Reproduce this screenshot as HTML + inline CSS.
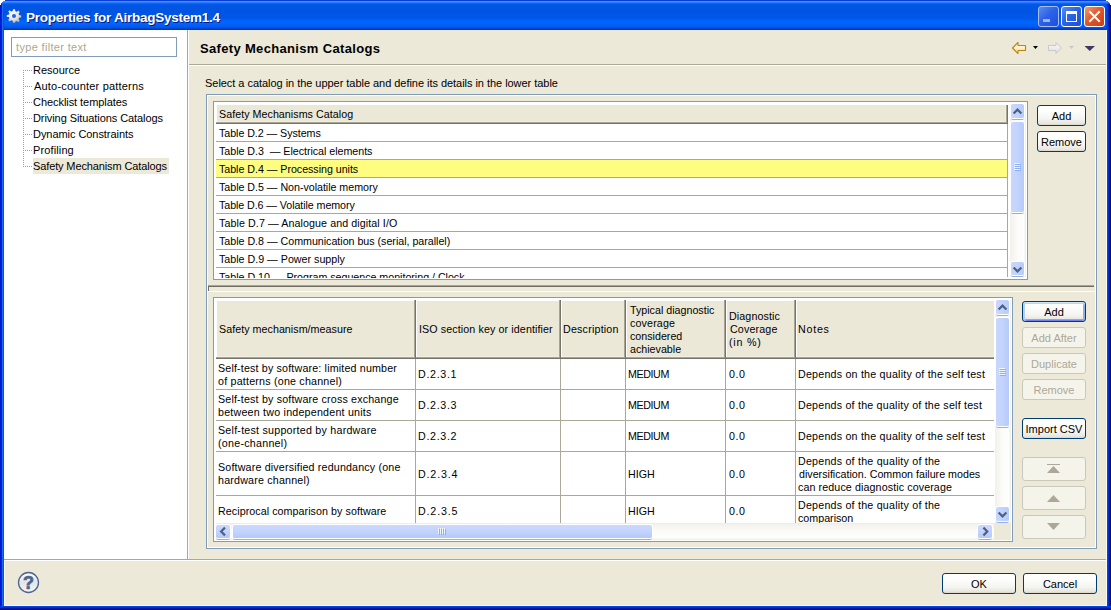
<!DOCTYPE html>
<html><head><meta charset="utf-8"><style>
*{box-sizing:border-box;margin:0;padding:0}
html,body{width:1111px;height:610px;overflow:hidden;background:#fff}
body{position:relative;font-family:"Liberation Sans",sans-serif;font-size:11px;color:#000;line-height:13px}
.a{position:absolute}
.t{position:absolute;white-space:pre;line-height:13px;font-size:11px}
.tt{position:absolute;white-space:pre;line-height:13px;font-size:10.7px}
.btn{position:absolute;border:1px solid #003c74;border-radius:3px;
 background:linear-gradient(to bottom,#fff 0,#fefefd 25%,#f4f4f0 70%,#e6e5de 92%,#d8d5c8 100%);
 text-align:center;font-size:11px;line-height:21px;color:#000;white-space:pre}
.btn.dis{border-color:#cac8bb;background:#f5f4ea;color:#aca899}
.btn.def{box-shadow:inset 0 1px 0 #cee7ff,inset 0 2px 0 #bcd4f6,inset 2px 0 0 #b5cdf3,inset -2px 0 0 #8fb1e6,inset 0 -1px 0 #6982ee,inset 0 -2px 0 #8da9ee}
.sb{position:absolute;border-radius:2px;background:linear-gradient(to right,#c9d7fd 0,#c2d3fc 50%,#b6cbf9 100%);
 box-shadow:0 0 0 1px #fff, 0 2px 0 0 #8fb0e8}
.trackv{position:absolute;background:linear-gradient(to right,#eeede5 0,#eeede5 1px,#f3f1ec 1px,#fbfbf8 50%,#fefefe 90%,#eeede5 100%)}
.trackh{position:absolute;background:linear-gradient(to bottom,#eeede5 0,#eeede5 1px,#f3f1ec 1px,#fbfbf8 50%,#fefefe 90%,#eeede5 100%)}
</style></head><body>
<div class="a" style="left:0;top:0;width:1111px;height:610px;overflow:hidden;background:#0831d9">
<div class="a" style="left:0;top:0;width:1111px;height:30px;background:linear-gradient(to bottom,#0a3fd6 0px,#0a3fd6 1px,#3d8fff 1px,#3d8fff 2px,#2a7dff 2px,#2a7dff 3px,#0c63f5 3px,#0c63f5 4px,#045be9 4px,#0056e4 6px,#0054e2 12px,#0057e8 18px,#0063fb 21px,#0066ff 23px,#005df4 26px,#0050e0 28px,#0039cc 29px,#0036c6 30px)"></div>
<div class="a" style="left:0;top:4px;width:4px;height:606px;background:linear-gradient(to right,#0019cf 0,#0019cf 1px,#0422d8 1px,#0422d8 2px,#1a6aee 2px,#1a6aee 3px,#0a50e6 3px)"></div>
<div class="a" style="left:1105px;top:4px;width:6px;height:26px;background:linear-gradient(to right,rgba(0,40,200,0) 0,#0343ec 2px,#0343ec 2px,#0131cc 3px,#001b98 4px,#000d80 6px)"></div>
<div class="a" style="left:1107px;top:29px;width:4px;height:581px;background:linear-gradient(to right,#0343ec 0,#0343ec 1px,#0131cc 1px,#0131cc 2px,#001b98 2px,#001b98 3px,#000d80 3px)"></div>
<div class="a" style="left:0;top:606px;width:1111px;height:4px;background:linear-gradient(to bottom,#0343ec 0,#0343ec 1px,#0131cc 1px,#0131cc 2px,#001b98 2px,#001b98 3px,#000d80 3px)"></div>
<div class="a" style="left:4px;top:30px;width:1103px;height:576px;background:#ece9d8"></div>
</div>
<div class="a" style="left:1106px;top:30px;width:1px;height:576px;background:#fdf8e8"></div>
<div class="a" style="left:4px;top:605px;width:1103px;height:1px;background:#fdf8e8"></div>
<div class="a" style="left:4px;top:30px;width:1px;height:576px;background:#fdf8e8"></div>
<div class="a" style="left:0px;top:0px;width:5px;height:1px;background:#fff"></div>
<div class="a" style="left:0px;top:1px;width:3px;height:1px;background:#fff"></div>
<div class="a" style="left:0px;top:2px;width:2px;height:1px;background:#fff"></div>
<div class="a" style="left:0px;top:3px;width:1px;height:1px;background:#fff"></div>
<div class="a" style="left:0px;top:4px;width:1px;height:1px;background:#fff"></div>
<div class="a" style="left:1106px;top:0px;width:5px;height:1px;background:#fff"></div>
<div class="a" style="left:1108px;top:1px;width:3px;height:1px;background:#fff"></div>
<div class="a" style="left:1109px;top:2px;width:2px;height:1px;background:#fff"></div>
<div class="a" style="left:1110px;top:3px;width:1px;height:1px;background:#fff"></div>
<div class="a" style="left:1110px;top:4px;width:1px;height:1px;background:#fff"></div>
<svg class="a" style="left:6px;top:8px" width="16" height="16" viewBox="0 0 16 16">
 <defs><radialGradient id="gg" cx="40%" cy="35%" r="70%"><stop offset="0" stop-color="#fbfbfa"/><stop offset="0.6" stop-color="#e4e3df"/><stop offset="1" stop-color="#aeaca4"/></radialGradient></defs>
 <path fill="url(#gg)" d="M7 1.2h2l.4 2.1 1.3.5 1.7-1.2 1.4 1.4-1.2 1.7.5 1.3 2.1.4v2l-2.1.4-.5 1.3 1.2 1.7-1.4 1.4-1.7-1.2-1.3.5L9 14.8H7l-.4-2.1-1.3-.5-1.7 1.2-1.4-1.4 1.2-1.7-.5-1.3L.8 9V7l2.1-.4.5-1.3-1.2-1.7 1.4-1.4 1.7 1.2 1.3-.5z"/>
 <circle cx="8" cy="8" r="2" fill="#1f63e6"/>
</svg>
<div id="t0" class="t" style="left:26px;top:11px;letter-spacing:-0.250px;font-size:13.5px;font-weight:bold;color:#fff;text-shadow:1px 1px 0 #0a1883">Properties for AirbagSystem1.4</div>
<div class="a" style="left:1038px;top:6px;width:21px;height:21px;border:1px solid #a9bdf1;border-radius:3px;background:linear-gradient(135deg,#5a8bf6 0,#2c62e8 45%,#1b4fdc 100%)"></div>
<div class="a" style="left:1043px;top:19px;width:7px;height:3px;background:#a6b2e6"></div>
<div class="a" style="left:1061px;top:6px;width:21px;height:21px;border:1px solid #fff;border-radius:3px;background:linear-gradient(135deg,#5a8bf6 0,#2c62e8 45%,#1b4fdc 100%)"></div>
<div class="a" style="left:1066px;top:11px;width:11px;height:11px;border:1px solid #fff;border-top-width:3px"></div>
<div class="a" style="left:1084px;top:6px;width:21px;height:21px;border:1px solid #fff;border-radius:3px;background:linear-gradient(135deg,#f09a77 0,#e1592e 45%,#cc3d12 100%)"></div>
<svg class="a" style="left:1084px;top:6px" width="21" height="21"><path d="M6 6L15 15M15 6L6 15" stroke="#fff" stroke-width="2" stroke-linecap="square"/></svg>
<div class="a" style="left:4px;top:30px;width:183px;height:529px;background:#fff"></div>
<div class="a" style="left:187px;top:30px;width:1px;height:529px;background:#aca899"></div>
<div class="a" style="left:188px;top:30px;width:1px;height:529px;background:#fff"></div>
<div class="a" style="left:4px;top:559px;width:1102px;height:1px;background:#aca899"></div>
<div class="a" style="left:4px;top:560px;width:1102px;height:1px;background:#fff"></div>
<div class="a" style="left:11px;top:37px;width:166px;height:20px;border:1px solid #7f9db9;background:#fff"></div>
<div id="t1" class="t" style="left:16px;top:41px;letter-spacing:0.333px;color:#aea78f">type filter text</div>
<div class="a" style="left:23px;top:70px;width:1px;height:97px;background-image:linear-gradient(to bottom,#a0a0a0 50%,transparent 50%);background-size:1px 2px"></div>
<div class="a" style="left:33px;top:158px;width:136px;height:16px;background:#ece9d8"></div>
<div class="a" style="left:23px;top:70px;width:10px;height:1px;background-image:linear-gradient(to right,#a0a0a0 50%,transparent 50%);background-size:2px 1px"></div>
<div id="t2" class="t" style="left:33px;top:64px;">Resource</div>
<div class="a" style="left:23px;top:86px;width:10px;height:1px;background-image:linear-gradient(to right,#a0a0a0 50%,transparent 50%);background-size:2px 1px"></div>
<div id="t3" class="t" style="left:34px;top:80px;letter-spacing:0.200px;">Auto-counter patterns</div>
<div class="a" style="left:23px;top:102px;width:10px;height:1px;background-image:linear-gradient(to right,#a0a0a0 50%,transparent 50%);background-size:2px 1px"></div>
<div id="t4" class="t" style="left:33px;top:96px;letter-spacing:-0.056px;">Checklist templates</div>
<div class="a" style="left:23px;top:118px;width:10px;height:1px;background-image:linear-gradient(to right,#a0a0a0 50%,transparent 50%);background-size:2px 1px"></div>
<div id="t5" class="t" style="left:33px;top:112px;letter-spacing:-0.077px;">Driving Situations Catalogs</div>
<div class="a" style="left:23px;top:134px;width:10px;height:1px;background-image:linear-gradient(to right,#a0a0a0 50%,transparent 50%);background-size:2px 1px"></div>
<div id="t6" class="t" style="left:33px;top:128px;letter-spacing:-0.056px;">Dynamic Constraints</div>
<div class="a" style="left:23px;top:150px;width:10px;height:1px;background-image:linear-gradient(to right,#a0a0a0 50%,transparent 50%);background-size:2px 1px"></div>
<div id="t7" class="t" style="left:33px;top:144px;letter-spacing:0.125px;">Profiling</div>
<div class="a" style="left:23px;top:166px;width:10px;height:1px;background-image:linear-gradient(to right,#a0a0a0 50%,transparent 50%);background-size:2px 1px"></div>
<div id="t8" class="t" style="left:33px;top:160px;letter-spacing:-0.125px;">Safety Mechanism Catalogs</div>
<div class="a" style="left:189px;top:64px;width:917px;height:1px;background:#aca899"></div>
<div class="a" style="left:189px;top:65px;width:917px;height:1px;background:#fff"></div>
<div id="t9" class="t" style="left:200px;top:42px;letter-spacing:0.333px;font-size:13px;font-weight:bold">Safety Mechanism Catalogs</div>
<svg class="a" style="left:1010px;top:40px" width="90" height="16" viewBox="0 0 90 16">
 <defs><linearGradient id="ya" x1="0" y1="0" x2="0" y2="1"><stop offset="0" stop-color="#fffdf0"/><stop offset="0.5" stop-color="#fff0c0"/><stop offset="1" stop-color="#fbdc80"/></linearGradient>
 <linearGradient id="ga" x1="0" y1="0" x2="0" y2="1"><stop offset="0" stop-color="#fbfbfb"/><stop offset="1" stop-color="#dedede"/></linearGradient></defs>
 <path d="M2.5 8L8 2.5V5.5H15.5V10.5H8V13.5Z" fill="url(#ya)" stroke="#b98220" stroke-width="1.1" stroke-linejoin="round"/>
 <path d="M23 6H28L25.5 9Z" fill="#000"/>
 <path d="M51.5 8L46 2.5V5.5H38.5V10.5H46V13.5Z" fill="url(#ga)" stroke="#c8c8c8" stroke-width="1" stroke-linejoin="round"/>
 <path d="M59 6H64L61.5 9Z" fill="#c8c8c8"/>
 <path d="M74.5 6H85L79.75 11Z" fill="#3e3a63"/>
</svg>
<div id="t10" class="t" style="left:205px;top:77px;letter-spacing:-0.039px;">Select a catalog in the upper table and define its details in the lower table</div>
<div class="a" style="left:206px;top:94px;width:891px;height:455px;border:1px solid #7f9db9"></div>
<div class="a" style="left:207px;top:95px;width:889px;height:453px;border:1px solid #fff"></div>
<div class="a" style="left:213px;top:101px;width:815px;height:179px;border:1px solid #7f9db9;background:#fff"></div>
<div class="a" style="left:214px;top:102px;width:813px;height:176px;overflow:hidden">
<div class="a" style="left:3px;top:3px;width:791px;height:19px;background:#ebe8d8;box-shadow:inset 0 -1px 0 #77746a,inset -1px 0 0 #77746a,inset 0 -2px 0 #a7a493,inset -2px 0 0 #a7a493,inset 0 -3px 0 #f1efe3,inset -3px 0 0 #f1efe3"></div>
<div class="a" style="left:2px;top:20px;width:1px;height:1px;background:#a7a493"></div>
<div class="a" style="left:2px;top:21px;width:1px;height:1px;background:#77746a"></div>
<div id="t11" class="tt" style="left:5px;top:6px;letter-spacing:0.042px;">Safety Mechanisms Catalog</div>
<div class="a" style="left:2px;top:39px;width:791px;height:1px;background:#aca899"></div>
<div id="t12" class="tt" style="left:5px;top:25px;letter-spacing:-0.056px;">Table D.2 — Systems</div>
<div class="a" style="left:2px;top:57px;width:791px;height:1px;background:#aca899"></div>
<div id="t13" class="tt" style="left:5px;top:43px;letter-spacing:-0.032px;">Table D.3  — Electrical elements</div>
<div class="a" style="left:2px;top:58px;width:791px;height:17px;background:#fffd80"></div>
<div class="a" style="left:2px;top:75px;width:791px;height:1px;background:#aca899"></div>
<div id="t14" class="tt" style="left:5px;top:61px;letter-spacing:-0.037px;">Table D.4 — Processing units</div>
<div class="a" style="left:2px;top:93px;width:791px;height:1px;background:#aca899"></div>
<div id="t15" class="tt" style="left:5px;top:79px;letter-spacing:-0.033px;">Table D.5 — Non-volatile memory</div>
<div class="a" style="left:2px;top:111px;width:791px;height:1px;background:#aca899"></div>
<div id="t16" class="tt" style="left:5px;top:97px;letter-spacing:-0.077px;">Table D.6 — Volatile memory</div>
<div class="a" style="left:2px;top:129px;width:791px;height:1px;background:#aca899"></div>
<div id="t17" class="tt" style="left:5px;top:115px;letter-spacing:0.086px;">Table D.7 — Analogue and digital I/O</div>
<div class="a" style="left:2px;top:147px;width:791px;height:1px;background:#aca899"></div>
<div id="t18" class="tt" style="left:5px;top:133px;letter-spacing:-0.021px;">Table D.8 — Communication bus (serial, parallel)</div>
<div class="a" style="left:2px;top:165px;width:791px;height:1px;background:#aca899"></div>
<div id="t19" class="tt" style="left:5px;top:151px;">Table D.9 — Power supply</div>
<div class="a" style="left:2px;top:183px;width:791px;height:1px;background:#aca899"></div>
<div id="t20" class="tt" style="left:5px;top:169px;letter-spacing:-0.021px;">Table D.10 — Program sequence monitoring / Clock</div>
<div class="a" style="left:793px;top:22px;width:1px;height:153px;background:#aca899"></div>
<div class="a" style="left:795px;top:2px;width:17px;height:173px;background:linear-gradient(to right,#fff 0,#fff 1px,#f3f1ec 1px,#fbfbf8 50%,#fefefe 85%,#eeede5 100%)"></div>
</div>
<div class="sb" style="left:1011px;top:104px;width:13px;height:14px;"></div>
<svg class="a" style="left:1011px;top:104px" width="13" height="14" viewBox="0 0 13 14"><path d="M2.6 9.5L6.5 5.6L10.4 9.5" fill="none" stroke="#4d6185" stroke-width="2.2" stroke-linejoin="miter"/></svg>
<div class="sb" style="left:1011px;top:122px;width:13px;height:90px;"></div>
<div class="a" style="left:1015px;top:164px;width:6px;height:1px;background:#8cb0f8"></div>
<div class="a" style="left:1014px;top:163px;width:6px;height:1px;background:#eef4fe"></div>
<div class="a" style="left:1015px;top:166px;width:6px;height:1px;background:#8cb0f8"></div>
<div class="a" style="left:1014px;top:165px;width:6px;height:1px;background:#eef4fe"></div>
<div class="a" style="left:1015px;top:168px;width:6px;height:1px;background:#8cb0f8"></div>
<div class="a" style="left:1014px;top:167px;width:6px;height:1px;background:#eef4fe"></div>
<div class="a" style="left:1015px;top:170px;width:6px;height:1px;background:#8cb0f8"></div>
<div class="a" style="left:1014px;top:169px;width:6px;height:1px;background:#eef4fe"></div>
<div class="sb" style="left:1011px;top:262px;width:13px;height:13px;"></div>
<svg class="a" style="left:1011px;top:262px" width="13" height="13" viewBox="0 0 13 13"><path d="M2.6 5.5L6.5 9.4L10.4 5.5" fill="none" stroke="#4d6185" stroke-width="2.2" stroke-linejoin="miter"/></svg>
<div class="btn" style="left:1037px;top:105px;width:49px;height:21px">Add</div>
<div class="btn" style="left:1037px;top:131px;width:49px;height:21px">Remove</div>
<div class="a" style="left:208px;top:285px;width:886px;height:1px;background:#a7a493"></div>
<div class="a" style="left:208px;top:286px;width:886px;height:1px;background:#716f64"></div>
<div class="a" style="left:208px;top:286px;width:1px;height:5px;background:#716f64"></div>
<div class="a" style="left:208px;top:291px;width:887px;height:1px;background:#fff"></div>
<div class="a" style="left:213px;top:297px;width:800px;height:245px;border:1px solid #7f9db9;background:#fff"></div>
<div class="a" style="left:217px;top:301px;width:777px;height:58px;background:#ebe8d8"></div>
<div class="a" style="left:217px;top:356px;width:777px;height:1px;background:#f1efe3"></div>
<div class="a" style="left:216px;top:357px;width:778px;height:1px;background:#a7a493"></div>
<div class="a" style="left:216px;top:358px;width:778px;height:1px;background:#77746a"></div>
<div class="a" style="left:414px;top:300px;width:1px;height:57px;background:#a7a493"></div>
<div class="a" style="left:415px;top:300px;width:1px;height:59px;background:#77746a"></div>
<div class="a" style="left:416px;top:301px;width:1px;height:56px;background:#fff"></div>
<div class="a" style="left:559px;top:300px;width:1px;height:57px;background:#a7a493"></div>
<div class="a" style="left:560px;top:300px;width:1px;height:59px;background:#77746a"></div>
<div class="a" style="left:561px;top:301px;width:1px;height:56px;background:#fff"></div>
<div class="a" style="left:624px;top:300px;width:1px;height:57px;background:#a7a493"></div>
<div class="a" style="left:625px;top:300px;width:1px;height:59px;background:#77746a"></div>
<div class="a" style="left:626px;top:301px;width:1px;height:56px;background:#fff"></div>
<div class="a" style="left:724px;top:300px;width:1px;height:57px;background:#a7a493"></div>
<div class="a" style="left:725px;top:300px;width:1px;height:59px;background:#77746a"></div>
<div class="a" style="left:726px;top:301px;width:1px;height:56px;background:#fff"></div>
<div class="a" style="left:794px;top:300px;width:1px;height:57px;background:#a7a493"></div>
<div class="a" style="left:795px;top:300px;width:1px;height:59px;background:#77746a"></div>
<div class="a" style="left:796px;top:301px;width:1px;height:56px;background:#fff"></div>
<div id="t21" class="tt" style="left:219px;top:323px;letter-spacing:0.043px;">Safety mechanism/measure</div>
<div id="t22" class="tt" style="left:419px;top:323px;letter-spacing:0.107px;">ISO section key or identifier</div>
<div id="t23" class="tt" style="left:563px;top:323px;letter-spacing:0.200px;">Description</div>
<div id="t24" class="tt" style="left:630px;top:304px;">Typical diagnostic</div>
<div id="t25" class="tt" style="left:630px;top:317px;letter-spacing:0.143px;">coverage</div>
<div id="t26" class="tt" style="left:630px;top:330px;">considered</div>
<div id="t27" class="tt" style="left:630px;top:343px;">achievable</div>
<div id="t28" class="tt" style="left:729px;top:310px;letter-spacing:0.111px;">Diagnostic</div>
<div id="t29" class="tt" style="left:730px;top:323px;letter-spacing:0.143px;">Coverage</div>
<div id="t30" class="tt" style="left:729px;top:336px;letter-spacing:0.800px;">(in %)</div>
<div id="t31" class="tt" style="left:798px;top:323px;letter-spacing:0.750px;">Notes</div>
<div class="a" style="left:216px;top:359px;width:778px;height:164px;overflow:hidden">
<div id="t32" class="tt" style="left:2px;top:3px;letter-spacing:0.167px;">Self-test by software: limited number</div>
<div id="t33" class="tt" style="left:2px;top:16px;letter-spacing:0.208px;">of patterns (one channel)</div>
<div id="t34" class="tt" style="left:202px;top:9px;letter-spacing:0.667px;">D.2.3.1</div>
<div id="t35" class="tt" style="left:412px;top:9px;letter-spacing:-0.400px;">MEDIUM</div>
<div id="t36" class="tt" style="left:513px;top:9px;letter-spacing:0.500px;">0.0</div>
<div id="t37" class="tt" style="left:582px;top:9px;letter-spacing:0.211px;">Depends on the quality of the self test</div>
<div class="a" style="left:0px;top:30px;width:778px;height:1px;background:#aca899"></div>
<div id="t38" class="tt" style="left:2px;top:34px;letter-spacing:0.171px;">Self-test by software cross exchange</div>
<div id="t39" class="tt" style="left:2px;top:47px;letter-spacing:0.214px;">between two independent units</div>
<div id="t40" class="tt" style="left:202px;top:40px;letter-spacing:0.667px;">D.2.3.3</div>
<div id="t41" class="tt" style="left:412px;top:40px;letter-spacing:-0.400px;">MEDIUM</div>
<div id="t42" class="tt" style="left:513px;top:40px;letter-spacing:0.500px;">0.0</div>
<div id="t43" class="tt" style="left:582px;top:40px;letter-spacing:0.211px;">Depends of the quality of the self test</div>
<div class="a" style="left:0px;top:61px;width:778px;height:1px;background:#aca899"></div>
<div id="t44" class="tt" style="left:2px;top:65px;letter-spacing:0.233px;">Self-test supported by hardware</div>
<div id="t45" class="tt" style="left:2px;top:78px;letter-spacing:0.250px;">(one-channel)</div>
<div id="t46" class="tt" style="left:202px;top:71px;letter-spacing:0.667px;">D.2.3.2</div>
<div id="t47" class="tt" style="left:412px;top:71px;letter-spacing:-0.400px;">MEDIUM</div>
<div id="t48" class="tt" style="left:513px;top:71px;letter-spacing:0.500px;">0.0</div>
<div id="t49" class="tt" style="left:582px;top:71px;letter-spacing:0.211px;">Depends on the quality of the self test</div>
<div class="a" style="left:0px;top:92px;width:778px;height:1px;background:#aca899"></div>
<div id="t50" class="tt" style="left:2px;top:102px;letter-spacing:0.171px;">Software diversified redundancy (one</div>
<div id="t51" class="tt" style="left:2px;top:115px;letter-spacing:0.188px;">hardware channel)</div>
<div id="t52" class="tt" style="left:202px;top:109px;letter-spacing:0.833px;">D.2.3.4</div>
<div id="t53" class="tt" style="left:412px;top:109px;">HIGH</div>
<div id="t54" class="tt" style="left:513px;top:109px;letter-spacing:0.500px;">0.0</div>
<div id="t55" class="tt" style="left:582px;top:96px;letter-spacing:0.214px;">Depends of the quality of the</div>
<div id="t56" class="tt" style="left:583px;top:109px;">diversification. Common failure modes</div>
<div id="t57" class="tt" style="left:582px;top:122px;letter-spacing:0.103px;">can reduce diagnostic coverage</div>
<div class="a" style="left:0px;top:136px;width:778px;height:1px;background:#aca899"></div>
<div id="t58" class="tt" style="left:2px;top:146px;letter-spacing:0.062px;">Reciprocal comparison by software</div>
<div id="t59" class="tt" style="left:202px;top:146px;letter-spacing:0.833px;">D.2.3.5</div>
<div id="t60" class="tt" style="left:412px;top:146px;">HIGH</div>
<div id="t61" class="tt" style="left:513px;top:146px;letter-spacing:0.500px;">0.0</div>
<div id="t62" class="tt" style="left:582px;top:140px;letter-spacing:0.214px;">Depends of the quality of the</div>
<div id="t63" class="tt" style="left:582px;top:153px;">comparison</div>
<div class="a" style="left:0px;top:167px;width:778px;height:1px;background:#aca899"></div>
<div class="a" style="left:199px;top:0px;width:1px;height:164px;background:#aca899"></div>
<div class="a" style="left:344px;top:0px;width:1px;height:164px;background:#aca899"></div>
<div class="a" style="left:409px;top:0px;width:1px;height:164px;background:#aca899"></div>
<div class="a" style="left:509px;top:0px;width:1px;height:164px;background:#aca899"></div>
<div class="a" style="left:579px;top:0px;width:1px;height:164px;background:#aca899"></div>
</div>
<div class="a" style="left:994px;top:300px;width:17px;height:223px;background:linear-gradient(to right,#fff 0,#fff 1px,#f3f1ec 1px,#fbfbf8 50%,#fefefe 85%,#eeede5 100%)"></div>
<div class="sb" style="left:996px;top:300px;width:13px;height:14px;"></div>
<svg class="a" style="left:996px;top:300px" width="13" height="14" viewBox="0 0 13 14"><path d="M2.6 9.5L6.5 5.6L10.4 9.5" fill="none" stroke="#4d6185" stroke-width="2.2" stroke-linejoin="miter"/></svg>
<div class="sb" style="left:996px;top:318px;width:13px;height:108px;"></div>
<div class="a" style="left:1000px;top:369px;width:6px;height:1px;background:#8cb0f8"></div>
<div class="a" style="left:999px;top:368px;width:6px;height:1px;background:#eef4fe"></div>
<div class="a" style="left:1000px;top:371px;width:6px;height:1px;background:#8cb0f8"></div>
<div class="a" style="left:999px;top:370px;width:6px;height:1px;background:#eef4fe"></div>
<div class="a" style="left:1000px;top:373px;width:6px;height:1px;background:#8cb0f8"></div>
<div class="a" style="left:999px;top:372px;width:6px;height:1px;background:#eef4fe"></div>
<div class="a" style="left:1000px;top:375px;width:6px;height:1px;background:#8cb0f8"></div>
<div class="a" style="left:999px;top:374px;width:6px;height:1px;background:#eef4fe"></div>
<div class="sb" style="left:996px;top:507px;width:13px;height:14px;"></div>
<svg class="a" style="left:996px;top:507px" width="13" height="14" viewBox="0 0 13 14"><path d="M2.6 5.5L6.5 9.4L10.4 5.5" fill="none" stroke="#4d6185" stroke-width="2.2" stroke-linejoin="miter"/></svg>
<div class="a" style="left:994px;top:523px;width:17px;height:17px;background:#ece9d8"></div>
<div class="a" style="left:216px;top:523px;width:778px;height:17px;background:linear-gradient(to bottom,#eeede5 0,#eeede5 1px,#f3f1ec 1px,#fbfbf8 50%,#fefefe 85%,#eeede5 100%)"></div>
<div class="sb" style="left:216px;top:525px;width:14px;height:13px;background:linear-gradient(to bottom,#cbd9fd 0,#c3d3fc 50%,#b3c9f8 100%);"></div>
<svg class="a" style="left:216px;top:525px" width="14" height="13" viewBox="0 0 14 13"><path d="M9 2.6L5.1 6.5L9 10.4" fill="none" stroke="#4d6185" stroke-width="2.2" stroke-linejoin="miter"/></svg>
<div class="sb" style="left:233px;top:525px;width:419px;height:13px;background:linear-gradient(to bottom,#cbd9fd 0,#c3d3fc 50%,#b3c9f8 100%);"></div>
<div class="a" style="left:439px;top:529px;width:1px;height:6px;background:#8cb0f8"></div>
<div class="a" style="left:438px;top:528px;width:1px;height:6px;background:#eef4fe"></div>
<div class="a" style="left:441px;top:529px;width:1px;height:6px;background:#8cb0f8"></div>
<div class="a" style="left:440px;top:528px;width:1px;height:6px;background:#eef4fe"></div>
<div class="a" style="left:443px;top:529px;width:1px;height:6px;background:#8cb0f8"></div>
<div class="a" style="left:442px;top:528px;width:1px;height:6px;background:#eef4fe"></div>
<div class="a" style="left:445px;top:529px;width:1px;height:6px;background:#8cb0f8"></div>
<div class="a" style="left:444px;top:528px;width:1px;height:6px;background:#eef4fe"></div>
<div class="sb" style="left:978px;top:525px;width:14px;height:13px;background:linear-gradient(to bottom,#cbd9fd 0,#c3d3fc 50%,#b3c9f8 100%);"></div>
<svg class="a" style="left:978px;top:525px" width="14" height="13" viewBox="0 0 14 13"><path d="M5.4 2.6L9.3 6.5L5.4 10.4" fill="none" stroke="#4d6185" stroke-width="2.2" stroke-linejoin="miter"/></svg>
<div class="btn def" style="left:1022px;top:301px;width:64px;height:21px">Add</div>
<div class="btn dis" style="left:1022px;top:327px;width:64px;height:21px">Add After</div>
<div class="btn dis" style="left:1022px;top:353px;width:64px;height:21px">Duplicate</div>
<div class="btn dis" style="left:1022px;top:379px;width:64px;height:21px">Remove</div>
<div class="btn" style="left:1022px;top:418px;width:64px;height:21px">Import CSV</div>
<div class="btn dis" style="left:1022px;top:457px;width:64px;height:24px"></div>
<div class="btn dis" style="left:1022px;top:486px;width:64px;height:24px"></div>
<div class="btn dis" style="left:1022px;top:515px;width:64px;height:24px"></div>
<svg class="a" style="left:1022px;top:457px" width="64" height="24"><path d="M25 7H38V8H25Z" fill="#aca899"/><path d="M25 16L31.5 9L38 16Z" fill="#aca899"/></svg>
<svg class="a" style="left:1022px;top:486px" width="64" height="24"><path d="M25 16L31.5 9L38 16Z" fill="#aca899"/></svg>
<svg class="a" style="left:1022px;top:515px" width="64" height="24"><path d="M25 8L31.5 15L38 8Z" fill="#aca899"/></svg>
<svg class="a" style="left:17px;top:571px" width="23" height="23" viewBox="0 0 23 23">
<defs><linearGradient id="hg" x1="0" y1="0" x2="0" y2="1"><stop offset="0" stop-color="#fdfdfd"/><stop offset="0.5" stop-color="#e4e4e8"/><stop offset="1" stop-color="#f6f6f8"/></linearGradient></defs>
<circle cx="11.5" cy="11.5" r="10" fill="url(#hg)" stroke="#4e6591" stroke-width="1.3"/>
<text x="11.5" y="18" text-anchor="middle" font-family="Liberation Sans" font-weight="bold" font-size="18" fill="#4e6591" stroke="#4e6591" stroke-width="0.7">?</text>
</svg>
<div class="btn" style="left:942px;top:573px;width:74px;height:21px">OK</div>
<div class="btn" style="left:1023px;top:573px;width:74px;height:21px">Cancel</div>
</body></html>
